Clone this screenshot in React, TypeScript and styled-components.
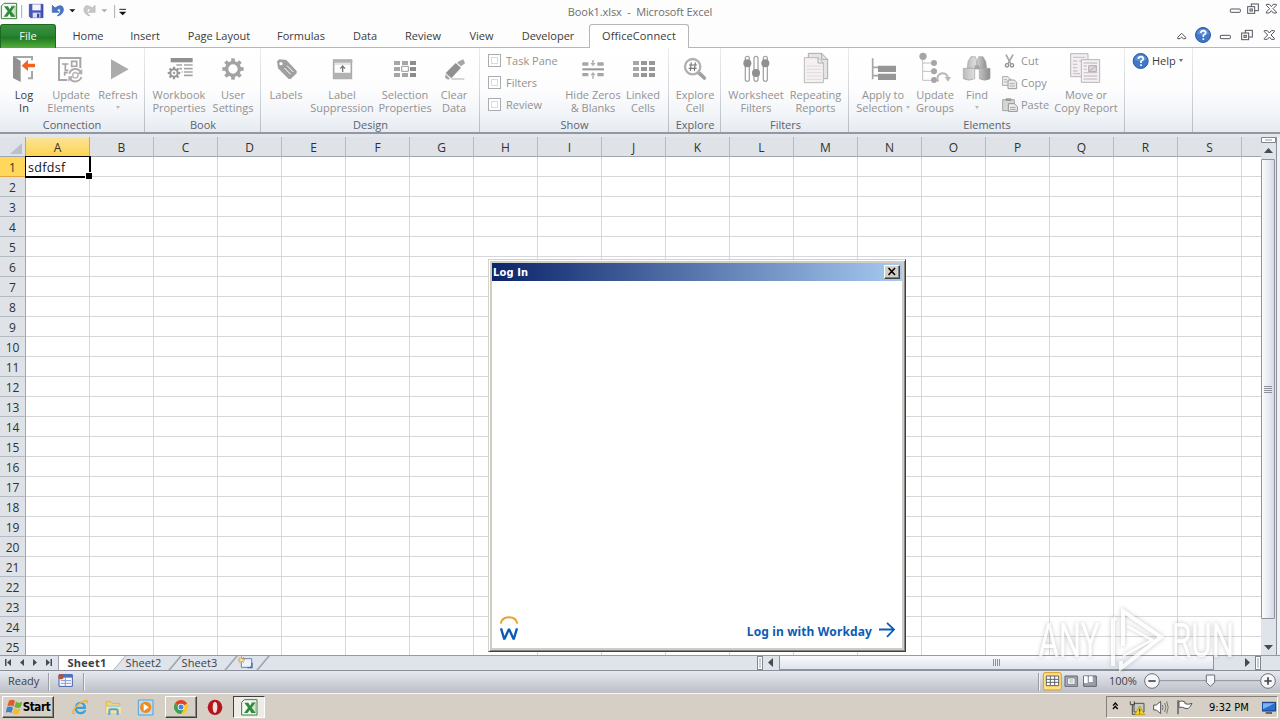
import React from 'react';
import styled, { createGlobalStyle, css } from 'styled-components';

const Global = createGlobalStyle`
  * { box-sizing: border-box; }
  html, body { margin: 0; padding: 0; overflow: hidden; }
  body { font-family: "Open Sans", "Noto Sans", sans-serif; font-size: 11px; color: #3b3b3b; background: #fff; }
  svg { display: block; flex: none; }
`;

const Screen = styled.div`
  position: relative;
  width: 1280px;
  height: 720px;
  overflow: hidden;
  display: flex;
  flex-direction: column;
  background: #fdfdfd;
`;

/* ---------- title bar ---------- */
const TitleBar = styled.header`
  height: 24px;
  display: grid;
  grid-template-columns: 240px 1fr 240px;
`;
const QuickAccess = styled.div`
  display: flex;
  height: 24px;
`;
const Title = styled.div`
  line-height: 23px;
  text-align: center;
  color: #6f6f6f;
  white-space: pre;
  letter-spacing: -0.1px;
`;
const WindowButtons = styled.div`
  display: flex;
  justify-content: flex-end;
  height: 24px;
`;

/* ---------- ribbon tabs ---------- */
const TabStrip = styled.nav`
  height: 24px;
  display: flex;
  border-bottom: 1px solid #b3b6ba;
`;
const FileTab = styled.div`
  width: 56px;
  height: 24px;
  border: 1px solid #1c6a1f;
  border-bottom: 0;
  border-radius: 3px 3px 0 0;
  background: linear-gradient(#3a9140 0%, #2a8431 45%, #1f7a25 55%, #56ad3c 100%);
  color: #f2faf0;
  line-height: 22px;
  text-align: center;
`;
const RibbonTab = styled.div<{ $w: number; $active?: boolean }>`
  width: ${p => p.$w}px;
  height: 24px;
  line-height: 24px;
  text-align: center;
  white-space: nowrap;
  ${p => p.$active && css`
    margin-left: 6px;
    border: 1px solid #b3b6ba;
    border-bottom: 0;
    border-radius: 3px 3px 0 0;
    background: #fff;
    line-height: 22px;
    letter-spacing: 0.1px;
  `}
`;
const TabTools = styled.div`
  margin-left: auto;
  height: 23px;
`;

/* ---------- ribbon ---------- */
const Ribbon = styled.section`
  height: 86px;
  display: flex;
  background: linear-gradient(#ffffff 0%, #fdfdfe 50%, #f1f4f8 80%, #e6ebf1 100%);
  border-bottom: 2px solid #9297a0;
`;
const Group = styled.div<{ $w: number; $pad?: number }>`
  width: ${p => p.$w}px;
  padding-left: ${p => p.$pad ?? 4}px;
  border-right: 1px solid;
  border-image: linear-gradient(#eceef0, #b9bdc3) 1;
  display: flex;
  flex-direction: column;
`;
const GroupBody = styled.div`
  display: flex;
  height: 70px;
`;
const GroupTitle = styled.div<{ $shift?: number }>`
  height: 14px;
  line-height: 14px;
  text-align: center;
  color: #5c636c;
  margin-left: ${p => p.$shift ?? -4}px;
`;
const BigButton = styled.div<{ $w: number; $on?: boolean }>`
  width: ${p => p.$w}px;
  display: flex;
  flex-direction: column;
  align-items: center;
  padding-top: 4px;
  color: ${p => (p.$on ? '#3b3b3b' : '#929292')};
`;
const Caption = styled.div`
  margin-top: 3px;
  line-height: 13px;
  text-align: center;
  white-space: pre;
`;
const DropArrow = styled.i<{ $dark?: boolean }>`
  display: inline-block;
  width: 0;
  height: 0;
  border: 2.5px solid transparent;
  border-top: 3px solid ${p => (p.$dark ? '#6d6d6d' : '#b8b8b8')};
  border-bottom: 0;
  vertical-align: 3px;
`;
const SmallColumn = styled.div<{ $w: number; $pad: number }>`
  width: ${p => p.$w}px;
  padding: 1px 0 0 ${p => p.$pad}px;
`;
const SmallItem = styled.div<{ $gap: number; $dark?: boolean }>`
  height: 22px;
  padding-top: 1px;
  display: flex;
  align-items: center;
  gap: ${p => p.$gap}px;
  line-height: 17px;
  color: ${p => (p.$dark ? '#3b3b3b' : '#929292')};
  white-space: nowrap;
`;
const SmallLabel = styled.span`
  height: 18px;
  line-height: 17px;
`;
const CheckBox = styled.i`
  width: 13px;
  height: 13px;
  margin-bottom: 1px;
  border: 1px solid #a9adb2;
  background: #fff;
  box-shadow: inset 0 0 0 2px #fff, inset 0 0 0 3px #d9dbde;
`;

/* ---------- sheet ---------- */
const SheetArea = styled.main`
  height: 521px;
  display: flex;
  overflow: hidden;
  background: #fff;
  border-top: 3px solid #e3e7ed;
`;
const Grid = styled.div`
  width: 1261px;
  overflow: hidden;
`;
const GridRow = styled.div`
  display: flex;
  height: 20px;
`;
const Corner = styled.div`
  width: 26px;
  flex: none;
  background: #dfe3e8;
  border-right: 1px solid #9fa6af;
  border-bottom: 1px solid #9fa6af;
  padding: 6px 0 0 10px;
`;
const ColHead = styled.div<{ $sel?: boolean }>`
  width: 64px;
  flex: none;
  text-align: center;
  font-size: 12px;
  line-height: 21px;
  color: #303030;
  background: #dfe3e8;
  border-right: 1px solid #b4bac2;
  border-bottom: 1px solid #9fa6af;
  ${p => p.$sel && css`
    background: linear-gradient(#fbe39a, #ffd452);
    border-color: #e5a53c;
  `}
`;
const RowHead = styled.div<{ $sel?: boolean }>`
  width: 26px;
  flex: none;
  text-align: center;
  font-size: 12px;
  line-height: 22px;
  color: #303030;
  background: #dfe3e8;
  border-right: 1px solid #9fa6af;
  border-bottom: 1px solid #b4bac2;
  ${p => p.$sel && css`
    background: #ffd75a;
    border-color: #e5a53c;
  `}
`;
const Cell = styled.div`
  position: relative;
  width: 64px;
  flex: none;
  font-size: 12.5px;
  letter-spacing: 0.3px;
  line-height: 21px;
  padding-left: 2px;
  color: #111;
  border-right: 1px solid #d5d7d9;
  border-bottom: 1px solid #d5d7d9;
`;
const Selection = styled.div`
  position: absolute;
  z-index: 1;
  left: -1px;
  top: -1px;
  width: 66px;
  height: 22px;
  border: 2px solid #000;
  border-left-width: 1px;
  border-top-width: 1px;
  &::after {
    content: '';
    position: absolute;
    right: -3px;
    bottom: -3px;
    width: 6px;
    height: 6px;
    background: #000;
    border: solid #fff;
    border-width: 1px 0 0 1px;
  }
`;
const VScroll = styled.div`
  width: 16px;
  height: 518px;
  background: #dfe3ea;
  border-right: 1px solid #8b9099;
  display: flex;
  flex-direction: column;
`;
const VThumb = styled.div`
  width: 14px;
  height: 460px;
  border: 1px solid #8d93a0;
  border-radius: 1px;
  background: linear-gradient(90deg, #fbfbfd, #eceef4 45%, #d6dae3);
  display: flex;
  align-items: center;
  justify-content: center;
`;
const Edge = styled.div`
  flex: 1;
  background: #f0f1f4;
`;

/* ---------- sheet tabs & horizontal scroll ---------- */
const BottomBar = styled.div`
  height: 16px;
  display: flex;
  background: #dfe3ea;
  border-top: 1px solid #959ba5;
  border-bottom: 1px solid #8a8f99;
`;
const NavArrows = styled.div`
  width: 59px;
`;
const SheetTab = styled.div<{ $w: number; $active?: boolean }>`
  position: relative;
  width: ${p => p.$w}px;
  height: 14px;
  line-height: 14px;
  padding-left: ${p => (p.$active ? 0 : 1)}px;
  text-align: center;
  font-weight: ${p => (p.$active ? 700 : 400)};
  letter-spacing: ${p => (p.$active ? 0.3 : 0.1)}px;
  color: #3c4046;
  background: ${p => (p.$active ? '#fff' : 'transparent')};
  &::after {
    content: '';
    position: absolute;
    top: 0;
    right: -5px;
    width: ${p => (p.$active ? 11 : 1)}px;
    height: 14px;
    background: ${p => (p.$active ? '#fff' : '#a3a9b3')};
    border-right: 1px solid #a3a9b3;
    transform: skewX(-40deg);
  }
`;
const TabLabel = styled.span`
  position: relative;
  z-index: 1;
`;
const HScroll = styled.div`
  margin-left: auto;
  width: 523px;
  display: flex;
`;
const SplitBox = styled.i`
  width: 6px;
  height: 14px;
  border: 1px solid #80858f;
  background: #c9ced6;
  box-shadow: inset 0 0 0 1px #fff;
`;
const HThumb = styled.div`
  width: 435px;
  height: 14px;
  border: 1px solid #8d93a0;
  border-top: 0;
  background: linear-gradient(#fafbfd, #e9ecf3 60%, #dfe3ec);
  display: flex;
  align-items: center;
  justify-content: center;
`;

/* ---------- status bar ---------- */
const StatusBar = styled.footer`
  height: 22px;
  display: flex;
  align-items: center;
  background: linear-gradient(#e6e9f0, #d0d3da 50%, #bcbfc6);
`;
const StatusText = styled.span<{ $w: number; $pad: number }>`
  width: ${p => p.$w}px;
  flex: none;
  padding-left: ${p => p.$pad}px;
  color: #3d4148;
  line-height: 20px;
  height: 22px;
`;
const StatusRule = styled.i`
  width: 2px;
  height: 18px;
  background: #9a9ea7;
  border-right: 1px solid #eef0f4;
`;
const StatusSpace = styled.div`
  flex: 1;
`;

/* ---------- taskbar ---------- */
const TaskBar = styled.div`
  height: 27px;
  display: flex;
  align-items: flex-start;
  padding: 2px 2px 0;
  background: #d5cfc6;
  border-top: 1px solid #f7f6f3;
  font-family: "DejaVu Sans Condensed", "DejaVu Sans", sans-serif;
  color: #000;
`;
const TaskButton = styled.div<{ $w: number; $state?: 'up' | 'down' }>`
  width: ${p => p.$w}px;
  height: 22px;
  display: flex;
  align-items: center;
  justify-content: center;
  ${p => p.$state === 'up' && css`
    border: 1px solid;
    border-color: #fff #404040 #404040 #fff;
    box-shadow: inset -1px -1px 0 #8a857c;
  `}
  ${p => p.$state === 'down' && css`
    border: 1px solid;
    border-color: #404040 #fff #fff #404040;
    background: #efece7;
  `}
`;
const StartLabel = styled.b`
  font-size: 11.5px;
  letter-spacing: -0.35px;
`;
const Tray = styled.div`
  margin-left: auto;
  width: 172px;
  height: 22px;
  border: 1px solid;
  border-color: #858078 #fff #fff #858078;
  display: flex;
  align-items: center;
`;
const Clock = styled.span`
  width: 53px;
  margin-left: -1px;
  font-size: 11px;
  white-space: nowrap;
`;

/* ---------- log in dialog ---------- */
const Dialog = styled.div`
  position: absolute;
  left: 488px;
  top: 259px;
  width: 418px;
  height: 393px;
  border: 1px solid;
  border-color: #d5d2cb #404040 #404040 #d5d2cb;
  box-shadow: inset 1px 1px 0 #fff, inset -1px -1px 0 #858585, inset 0 0 0 3px #d0cdc6;
  background: #fff;
  padding: 3px;
  display: flex;
  flex-direction: column;
`;
const DialogTitle = styled.div`
  height: 18px;
  padding: 0 2px 0 1px;
  display: flex;
  align-items: center;
  justify-content: space-between;
  background: linear-gradient(90deg, #0b246a, #a6caf0);
  color: #fff;
  font: bold 11px "DejaVu Sans Condensed", sans-serif;
  letter-spacing: 0.15px;
`;
const CloseButton = styled.div`
  width: 16px;
  height: 14px;
  background: #d4d0c8;
  border: 1px solid;
  border-color: #fff #404040 #404040 #fff;
  box-shadow: inset -1px -1px 0 #808080;
`;
const DialogFooter = styled.div`
  margin-top: auto;
  height: 35px;
  padding: 0 6px 0 6px;
  display: flex;
  justify-content: space-between;
`;
const LoginLink = styled.div`
  display: flex;
  align-items: center;
  gap: 7px;
  height: 34px;
  padding-top: 2px;
  font: bold 12px "Noto Sans", sans-serif;
  letter-spacing: 0.13px;
  color: #0b5cb5;
  svg { margin-bottom: 1px; }
`;

const Watermark = styled.div`
  position: absolute;
  left: 1038px;
  top: 606px;
  width: 196px;
  height: 66px;
  display: flex;
  align-items: center;
  justify-content: space-between;
  pointer-events: none;
  filter: drop-shadow(0 0 2px rgba(90, 90, 90, 0.5));
  opacity: 0.72;
`;
const MarkWord = styled.span`
  width: 62px;
  display: flex;
  justify-content: center;
  font: 400 49px/66px Roboto, sans-serif;
  color: #fff;
  transform: translateY(2px) scaleX(0.64);
`;

/* ---------- icons ---------- */
/* Icon art is drawn on a grid of three units per pixel. */
type IconProps = { x: number; y?: number; w?: number; h?: number; children: React.ReactNode };
const Icon = ({ x, y = 156, w = 32, h = 33, children }: IconProps) => (
  <svg width={w} height={h} viewBox={`${x} ${y} ${w * 3} ${h * 3}`}>{children}</svg>
);
const G = '#a6a6a6';
const D = '#919191';

const gear = (cx: number, cy: number, r: number, tooth: number, color: string) => (
  <g stroke={color} fill="none">
    <circle cx={cx} cy={cy} r={r} strokeWidth={tooth} />
    {[0, 45, 90, 135, 180, 225, 270, 315].map(a => (
      <path key={a} d={`M${cx} ${cy - r - tooth * 0.2}V${cy - r - tooth * 1.3}`} strokeWidth={tooth * 1.1} transform={`rotate(${a} ${cx} ${cy})`} />
    ))}
  </g>
);

const LogInIcon = () => (
  <Icon x={24}>
    <path d="M42 171H96V181M96 213V235H84" fill="none" stroke={G} strokeWidth="6" />
    <path d="M39 168L62 183V246L39 234Z" fill={D} />
    <path d="M105 191V202H84V213L65 197L84 179V191Z" fill="#f26322" />
  </Icon>
);
const UpdateElementsIcon = () => (
  <Icon x={165}>
    <path d="M202 240H177V174H241V205" fill="none" stroke={G} strokeWidth="6" />
    <path d="M186 192H205M196 192V211H205M215 184H230V199H215ZM194 227V218H205" fill="none" stroke={G} strokeWidth="5" />
    <circle cx="226" cy="226" r="25" fill="#fff" opacity=".8" />
    <path d="M208 221A19 19 0 0 1 243 217M244 231A19 19 0 0 1 209 234" fill="none" stroke="#b1acac" strokeWidth="6" />
    <path d="M247 207V223H231ZM205 245V229H221Z" fill="#b1acac" />
    <circle cx="226" cy="226" r="8" fill="none" stroke="#c2bcbc" strokeWidth="5" />
  </Icon>
);
const RefreshIcon = () => (
  <Icon x={306}><path d="M333 178L386 208L333 238Z" fill="#ababab" /></Icon>
);
const WorkbookIcon = () => (
  <Icon x={489}>
    <path d="M512 174H578V187H512Z" fill={D} />
    <path d="M529 195H546M552 195H578M538 206H546M552 206H578M545 216H548M552 216H578M552 226H578" stroke={G} strokeWidth="5" />
    {gear(522, 219, 11, 6, '#969696')}
    <circle cx="522" cy="219" r="4" fill={G} />
  </Icon>
);
const SettingsIcon = () => <Icon x={651}>{gear(699, 207, 19, 10, '#a3a3a3')}</Icon>;
const LabelsIcon = () => (
  <Icon x={810}>
    <path fillRule="evenodd" d="M831 184L838 178L859 180L890 213V220L872 237H866L834 205ZM843 186A5 5 0 1 0 843 196A5 5 0 1 0 843 186Z" fill="#9f9f9f" />
    <path d="M853 204L872 223M861 197L880 216" stroke="#fff" strokeWidth="3" />
  </Icon>
);
const SuppressionIcon = () => (
  <Icon x={18}>
    <path d="M41 180H94V235H41Z" fill="#fff" stroke="#aaa" strokeWidth="5" />
    <path d="M39 179H97V188H39ZM41 218H94V236H41Z" fill="#b2b2b2" />
    <path d="M43 192H92" stroke="#c9c9c9" strokeWidth="3" />
    <path d="M68 216V200M61 206L68 198L75 206" fill="none" stroke="#777" strokeWidth="4" />
  </Icon>
);
const SelectionIcon = () => (
  <Icon x={207}>
    {[0, 1, 2].map(r => [0, 1, 2].map(c => r === 1 && c === 1
      ? <path key="m" d="M245 199H265V214H245Z" fill="#fff" stroke="#9a9a9a" strokeWidth="3" />
      : <rect key={`${r}${c}`} x={222 + c * 24} y={183 + r * 18} width="18" height="12" fill={c === 2 ? '#8d8d8d' : G} />))}
  </Icon>
);
const ClearIcon = () => (
  <Icon x={354}>
    <path d="M418 183L430 178L435 190L423 199L411 188Z" fill={G} />
    <path d="M407 189L423 203L394 235L377 219Z" fill={D} />
    <path d="M377 222L390 236L384 239L375 233Z" fill={G} />
    <path d="M394 237H433" stroke="#c2c2c2" strokeWidth="4" />
  </Icon>
);
const HideIcon = () => (
  <Icon x={771}>
    <path d="M787 187H805V197H787ZM832 187H851V197H832ZM787 219H805V229H787ZM832 219H851V229H832Z" fill={G} />
    <path d="M787 208H852" stroke="#969696" strokeWidth="6" />
    <path d="M819 180V190M819 236V226" stroke="#b5b5b5" strokeWidth="5" />
    <path d="M811 189H827L819 199ZM811 226H827L819 216Z" fill="#b0b0b0" />
  </Icon>
);
const LinkedIcon = () => (
  <Icon x={-39}>
    {[0, 1, 2].map(r => [0, 1, 2].map(c => (
      <rect key={`${r}${c}`} x={-21 + c * 24} y={183 + r * 18} width="18" height="12" fill={c === 0 ? G : '#979797'} />)))}
  </Icon>
);
const ExploreIcon = () => (
  <Icon x={117}>
    <path d="M176 218L193 234" stroke="#a0a0a0" strokeWidth="11" strokeLinecap="round" />
    <circle cx="158" cy="200" r="23" fill="#fff" stroke="#b0b0b0" strokeWidth="7" />
    <path d="M154 187L151 213M166 187L163 213M147 195H171M146 205H170" stroke="#777" strokeWidth="3.5" />
  </Icon>
);
const WorksheetFiltersIcon = () => (
  <Icon x={300}>
    {[[322, 190], [348, 219], [376, 190]].map(([x, y]) => (
      <g key={x}>
        <rect x={x - 6} y="169" width="12" height="75" rx="6" fill="#fff" stroke={G} strokeWidth="4" />
        <circle cx={x} cy={y} r="12" fill="#8f8f8f" />
      </g>
    ))}
  </Icon>
);
const ReportsIcon = () => (
  <Icon x={480}>
    <path d="M505 160H545L563 178V236H505Z" fill="#e6e4e4" stroke="#aaa" strokeWidth="3" />
    <path d="M493 173H534L550 189V248H493Z" fill="#f5f1f3" stroke="#bcb8ba" strokeWidth="3" />
    <path d="M534 173V189H550M545 160V178H563" fill="none" stroke="#aaa" strokeWidth="3" />
    <path d="M500 198H544M500 208H544M500 218H544M500 228H544M500 238H544" stroke="#dedadc" strokeWidth="3" />
  </Icon>
);
const ApplyIcon = () => (
  <Icon x={681}>
    <path d="M698 175V238M698 202H714M698 227H714" stroke={G} strokeWidth="5" />
    <path d="M714 197H768V216H714ZM714 221H768V240H714Z" fill="#969696" />
  </Icon>
);
const UpdateGroupsIcon = () => (
  <Icon x={837}>
    <path d="M848 170V241H882M848 189H882M848 214H882" fill="none" stroke="#c0c0c0" strokeWidth="3" />
    <circle cx="849" cy="169" r="11" fill={G} />
    <circle cx="882" cy="189" r="9" fill={G} />
    <circle cx="882" cy="214" r="9" fill={G} />
    <circle cx="882" cy="240" r="9" fill={G} />
    <path d="M895 245A16 16 0 1 1 924 236" fill="none" stroke="#b8b8b8" strokeWidth="6" />
    <path d="M914 231H933L924 245Z" fill="#b8b8b8" />
  </Icon>
);
const FindIcon = () => (
  <Icon x={3}>
    <defs><linearGradient id="bino"><stop offset="0" stopColor="#bbb" /><stop offset=".4" stopColor="#ddd" /><stop offset="1" stopColor="#8c8c8c" /></linearGradient></defs>
    <path d="M33 170H46L50 182V205H22L24 184Z M56 170H69L77 184L80 205H52V182Z" fill="url(#bino)" stroke="#a5a5a5" strokeWidth="2" />
    <path d="M44 196H58V208H44Z" fill="#a5a5a5" />
    <path d="M10 205H44V236Q27 245 10 236Z M58 205H90V236Q74 245 58 236Z" fill="url(#bino)" stroke="#a0a0a0" strokeWidth="2" />
  </Icon>
);
const MoveIcon = () => (
  <Icon x={330}>
    <path d="M332 161H384V230H332Z" fill="#f2eef1" stroke="#bbb4b9" strokeWidth="3" />
    <path d="M339 172H376M339 183H352M339 193H352M339 203H352M339 213H352M339 221H360M358 183H366V200" fill="none" stroke="#cfc7cc" strokeWidth="4" />
    <path d="M364 179H419V247H364Z" fill="#f4f1f3" stroke="#bbb4b9" strokeWidth="3" />
    <path d="M371 189H412M371 198H380M371 208H380M371 218H412M371 228H412M371 237H412" stroke="#cfc7cc" strokeWidth="4" />
    <path d="M386 197H409V215H386ZM386 215L409 197" fill="#ddd6db" stroke="#b5adb3" strokeWidth="3" />
  </Icon>
);
const CutIcon = () => (
  <Icon x={126} y={162} w={16} h={14}>
    <path d="M138 164L152 191M159 164L144 191" stroke="#a5a5a5" strokeWidth="5" />
    <circle cx="141" cy="196" r="5" fill="none" stroke="#8f8f8f" strokeWidth="4" />
    <circle cx="156" cy="196" r="5" fill="none" stroke="#8f8f8f" strokeWidth="4" />
  </Icon>
);
const CopyIcon = () => (
  <Icon x={126} y={228} w={16} h={14}>
    <path d="M127 230H144L151 237V256H127Z" fill="#eee" stroke={G} strokeWidth="3" />
    <path d="M144 240H163L170 247V266H144Z" fill="#e9e9e9" stroke="#999" strokeWidth="3" />
    <path d="M131 239H141M131 246H141M149 251H165M149 258H165" stroke="#b0b0b0" strokeWidth="3" />
  </Icon>
);
const PasteIcon = () => (
  <Icon x={126} y={294} w={16} h={14}>
    <path d="M128 299H163V332H128Z" fill="#d6d6d6" stroke={G} strokeWidth="3" />
    <path d="M137 295H154V303H137Z" fill="#999" />
    <path d="M145 311H163L172 320V334H145Z" fill="#eee" stroke="#929292" strokeWidth="3" />
    <path d="M150 322H167M150 328H167" stroke={G} strokeWidth="3" />
  </Icon>
);
const HelpMark = ({ cx, cy }: { cx: number; cy: number }) => (
  <g>
    <circle cx={cx} cy={cy} r="22.5" fill="#3f78c9" stroke="#2b59a5" strokeWidth="3" />
    <path d={`M${cx - 18} ${cy - 4}A18.500 18.500 0 0 1 ${cx + 18} ${cy - 4}Q${cx} ${cy + 4} ${cx - 18} ${cy - 4}Z`} fill="#6a9ce0" opacity=".7" />
    <path d={`M${cx - 7} ${cy - 6}Q${cx - 6} ${cy - 13} ${cx + 1} ${cy - 13}Q${cx + 8} ${cy - 12} ${cx + 8} ${cy - 6}Q${cx + 7} ${cy - 2} ${cx + 1} ${cy + 1}V${cy + 6}M${cx + 1} ${cy + 10}V${cy + 15}`} fill="none" stroke="#fff" strokeWidth="5" />
  </g>
);
/* minimise / restore / close glyphs, top-left corner at (x, y) */
const WinGlyphs = ({ x, y, gap }: { x: number; y: number; gap: number[] }) => (
  <g fill="#fff" stroke="#50555f" strokeWidth="3">
    <rect x={x} y={y + 15} width="30" height="10" rx="2" />
    <rect x={x + gap[0] + 11} y={y} width="21" height="20" />
    <rect x={x + gap[0]} y={y + 8} width="21" height="20" />
    <rect x={x + gap[0] + 7} y={y + 15} width="7" height="6" />
    <path d={`M${x + gap[1]} ${y + 1}h9l6 7l6 -7h9v3l-10 10l10 10v3h-9l-6 -7l-6 7h-9v-3l10 -10l-10 -10z`} />
  </g>
);

const ExcelMark = ({ x, y }: { x: number; y: number }) => (
  <g>
    <path d={`M${x + 8} ${y}H${x + 46}V${y + 46}H${x}V${y + 8}Z`} fill="#f4faf3" stroke="#3b7d3f" strokeWidth="3" />
    <path d={`M${x + 29} ${y + 8}h13v31h-13`} fill="#cfe6cd" stroke="#8cba89" strokeWidth="2" />
    <path d={`M${x + 8} ${y + 9}h12l5 9l6 -9h10l-11 15l12 16h-13l-5 -9l-6 9h-11l12 -16z`} fill="#2f8a3b" />
  </g>
);

const QuickIcons = () => (
  <Icon x={0} y={0} w={130} h={24}>
    <ExcelMark x={4} y={10} />
    <path d="M65 15V54M344 15V54" stroke="#a7abb2" strokeWidth="3" />
    <path d="M88 13H129V53H92L88 49Z" fill="#4659ba" stroke="#2d3b8d" strokeWidth="2" />
    <path d="M97 13H122V31H97Z" fill="#f3f5fc" />
    <path d="M98 38H121V53H98Z" fill="#d9dff2" /><path d="M111 41H118V53H111Z" fill="#3b4ba5" />
    <path d="M157 16V37H177L170 30Q178 21 181 30Q183 39 172 48Q192 43 190 26Q186 9 165 24Z" fill="#4676cd" stroke="#3059a6" strokeWidth="2" />
    <path d="M208 28H226L217 37Z" fill="#111" />
    <path d="M285 16V37H265L272 30Q264 21 261 30Q259 39 270 48Q250 43 252 26Q256 9 277 24Z" fill="#c8c8c8" stroke="#b0b0b0" strokeWidth="2" />
    <path d="M304 28H322L313 37Z" fill="#aaa" />
    <path d="M358 28H378" stroke="#222" strokeWidth="3" /><path d="M357 35H379L368 46Z" fill="#111" />
  </Icon>
);

const arrow = (d: string) => <path d={d} fill="#454a54" />;

const COLS = 'ABCDEFGHIJKLMNOPQRST'.split('');
const ROWS = Array.from({ length: 25 }, (_, i) => i + 1);

type ButtonDef = { w: number; icon: React.ReactNode; text: string; on?: boolean; drop?: boolean };
const Big = ({ w, icon, text, on, drop }: ButtonDef) => (
  <BigButton $w={w} $on={on}>
    {icon}
    <Caption>{text}{drop && <DropArrow />}</Caption>
  </BigButton>
);

export default function App() {
  return (
    <Screen>
      <Global />
      <TitleBar>
        <QuickAccess><QuickIcons /></QuickAccess>
        <Title>Book1.xlsx  -  Microsoft Excel</Title>
        <WindowButtons>
          <Icon x={750} y={0} w={70} h={24}><WinGlyphs x={811} y={12} gap={[52, 108]} /></Icon>
        </WindowButtons>
      </TitleBar>

      <TabStrip>
        <FileTab>File</FileTab>
        <RibbonTab $w={64}>Home</RibbonTab>
        <RibbonTab $w={50}>Insert</RibbonTab>
        <RibbonTab $w={98}>Page Layout</RibbonTab>
        <RibbonTab $w={66}>Formulas</RibbonTab>
        <RibbonTab $w={62}>Data</RibbonTab>
        <RibbonTab $w={54}>Review</RibbonTab>
        <RibbonTab $w={63}>View</RibbonTab>
        <RibbonTab $w={70}>Developer</RibbonTab>
        <RibbonTab $w={100} $active>OfficeConnect</RibbonTab>
        <TabTools>
          <Icon x={600} y={72} w={120} h={23}>
            <path d="M653 112L665 100L677 112V116H670L665 111L660 116H653Z" fill="#fff" stroke="#555" strokeWidth="3" />
            <HelpMark cx={729} cy={105} />
            <WinGlyphs x={781} y={91} gap={[64, 132]} />
          </Icon>
        </TabTools>
      </TabStrip>

      <Ribbon>
        <Group $w={145}>
          <GroupBody>
            <Big w={40} icon={<LogInIcon />} text={'Log\nIn'} on />
            <Big w={54} icon={<UpdateElementsIcon />} text={'Update\nElements'} />
            <Big w={40} icon={<RefreshIcon />} text={'Refresh\n'} drop />
          </GroupBody>
          <GroupTitle>Connection</GroupTitle>
        </Group>
        <Group $w={116} $pad={5}>
          <GroupBody>
            <Big w={58} icon={<WorkbookIcon />} text={'Workbook\nProperties'} />
            <Big w={50} icon={<SettingsIcon />} text={'User\nSettings'} />
          </GroupBody>
          <GroupTitle>Book</GroupTitle>
        </Group>
        <Group $w={219} $pad={5}>
          <GroupBody>
            <Big w={40} icon={<LabelsIcon />} text="Labels" />
            <Big w={72} icon={<SuppressionIcon />} text={'Label\nSuppression'} />
            <Big w={54} icon={<SelectionIcon />} text={'Selection\nProperties'} />
            <Big w={44} icon={<ClearIcon />} text={'Clear\nData'} />
          </GroupBody>
          <GroupTitle>Design</GroupTitle>
        </Group>
        <Group $w={189} $pad={8}>
          <GroupBody>
            <SmallColumn $w={74} $pad={0}>
              {['Task Pane', 'Filters', 'Review'].map(t => (
                <SmallItem key={t} $gap={5}><CheckBox /><SmallLabel>{t}</SmallLabel></SmallItem>
              ))}
            </SmallColumn>
            <Big w={62} icon={<HideIcon />} text={'Hide Zeros\n& Blanks'} />
            <Big w={38} icon={<LinkedIcon />} text={'Linked\nCells'} />
          </GroupBody>
          <GroupTitle $shift={-7}>Show</GroupTitle>
        </Group>
        <Group $w={52} $pad={2}>
          <GroupBody><Big w={48} icon={<ExploreIcon />} text={'Explore\nCell'} /></GroupBody>
          <GroupTitle $shift={-1}>Explore</GroupTitle>
        </Group>
        <Group $w={128}>
          <GroupBody>
            <Big w={62} icon={<WorksheetFiltersIcon />} text={'Worksheet\nFilters'} />
            <Big w={57} icon={<ReportsIcon />} text={'Repeating\nReports'} />
          </GroupBody>
          <GroupTitle $shift={-2}>Filters</GroupTitle>
        </Group>
        <Group $w={276} $pad={5}>
          <GroupBody>
            <Big w={58} icon={<ApplyIcon />} text={'Apply to\nSelection '} drop />
            <Big w={46} icon={<UpdateGroupsIcon />} text={'Update\nGroups'} />
            <Big w={38} icon={<FindIcon />} text={'Find\n'} drop />
            <SmallColumn $w={56} $pad={6}>
              <SmallItem $gap={3}><CutIcon /><SmallLabel>Cut</SmallLabel></SmallItem>
              <SmallItem $gap={3}><CopyIcon /><SmallLabel>Copy</SmallLabel></SmallItem>
              <SmallItem $gap={3}><PasteIcon /><SmallLabel>Paste</SmallLabel></SmallItem>
            </SmallColumn>
            <Big w={68} icon={<MoveIcon />} text={'Move or\nCopy Report'} />
          </GroupBody>
          <GroupTitle>Elements</GroupTitle>
        </Group>
        <Group $w={68} $pad={7}>
          <SmallColumn $w={60} $pad={0}>
            <SmallItem $gap={3} $dark>
              <Icon x={516} y={156} w={17} h={18}><HelpMark cx={542} cy={183} /></Icon>
              <SmallLabel>Help</SmallLabel><DropArrow $dark />
            </SmallItem>
          </SmallColumn>
        </Group>
      </Ribbon>

      <SheetArea>
        <Grid>
          <GridRow>
            <Corner><svg width="12" height="11"><path d="M12 0V11H0Z" fill="#b9c1cb" /></svg></Corner>
            {COLS.map(c => <ColHead key={c} $sel={c === 'A'}>{c === 'T' ? '' : c}</ColHead>)}
          </GridRow>
          {ROWS.map(r => (
            <GridRow key={r}>
              <RowHead $sel={r === 1}>{r}</RowHead>
              {COLS.map(c => (
                <Cell key={c}>{r === 1 && c === 'A' && <>sdfdsf<Selection /></>}</Cell>
              ))}
            </GridRow>
          ))}
        </Grid>
        <VScroll>
          <svg width="15" height="22">
            <path d="M.5 .5H14.500V5.500H.5Z" fill="#fff" stroke="#80858f" /><path d="M4 3H11" stroke="#999" />
            {arrow('M3 16L7.500 11L12 16Z')}
          </svg>
          <VThumb><svg width="8" height="7"><path d="M0 .5H8M0 2.500H8M0 4.500H8M0 6.500H8" stroke="#8b909b" /></svg></VThumb>
          <svg width="15" height="34">{arrow('M3 26H12L7.500 31Z')}</svg>
        </VScroll>
        <Edge />
      </SheetArea>

      <BottomBar>
        <NavArrows>
          <svg width="59" height="14">
            {arrow('M5 3H6.500V10H5ZM11 3V10L7 6.500ZM24 3V10L20 6.500ZM33 3V10L37 6.500ZM46 3V10L50 6.500ZM50.500 3H52V10H50.500Z')}
            <path d="M58.500 0V14" stroke="#9aa0aa" />
          </svg>
        </NavArrows>
        <SheetTab $w={56} $active><TabLabel>Sheet1</TabLabel></SheetTab>
        <SheetTab $w={56}><TabLabel>Sheet2</TabLabel></SheetTab>
        <SheetTab $w={56}><TabLabel>Sheet3</TabLabel></SheetTab>
        <SheetTab $w={32}>
          <Icon x={683} y={167} w={31} h={14}>
            <path d="M723 175H754V196L748 201H723Z" fill="#edf2fb" stroke="#6c84b5" strokeWidth="3" />
            <path d="M741 202H755V187" fill="none" stroke="#4a67a5" strokeWidth="4" />
            <path d="M723 168V190M712 179H734M715 171L731 187M731 171L715 187" stroke="#d99322" strokeWidth="3" />
            <circle cx="723" cy="179" r="4" fill="#fff0b0" />
          </Icon>
        </SheetTab>
        <HScroll>
          <SplitBox />
          <svg width="16" height="14">{arrow('M10 2V11L5 6.500Z')}</svg>
          <HThumb><svg width="8" height="7"><path d="M.5 0V7M2.500 0V7M4.500 0V7M6.500 0V7" stroke="#8b909b" /></svg></HThumb>
          <svg width="41" height="14">{arrow('M31 2V11L36 6.500Z')}</svg>
          <SplitBox />
        </HScroll>
      </BottomBar>

      <StatusBar>
        <StatusText $w={48} $pad={8}>Ready</StatusText>
        <StatusRule />
        <Icon x={150} y={213} w={33} h={22}>
          <path d="M177 224H217V259H177Z" fill="#fff" stroke="#3f5fae" strokeWidth="3" />
          <path d="M177 224H217V233H177Z" fill="#4a72c6" />
          <path d="M182 242H213M182 250H213M196 234V258" stroke="#7c9ad6" strokeWidth="3" />
          <circle cx="183" cy="230" r="8" fill="#b5523d" />
        </Icon>
        <StatusRule />
        <StatusSpace />
        <StatusRule />
        <Icon x={240} y={213} w={68} h={22}>
          <rect x="250" y="218" width="54" height="52" rx="5" fill="#ffe07a" stroke="#d99a2b" strokeWidth="3" />
          <path d="M259 228H296V257H259ZM259 238H296M259 247H296M271 228V257M284 228V257" fill="#fff" stroke="#5e636d" strokeWidth="3" />
          <path d="M315 228H352V259H315Z" fill="#aab0ba" stroke="#5e636d" strokeWidth="3" />
          <path d="M323 234H345V253H323Z" fill="#fff" stroke="#5e636d" strokeWidth="2" /><path d="M328 240H340M328 246H340" stroke="#777" strokeWidth="2" />
          <path d="M371 228H409V259H371Z" fill="#9aa0ab" stroke="#5e636d" strokeWidth="3" />
          <path d="M372 229H383V249H372ZM387 229H398V246H387Z" fill="#fff" />
        </Icon>
        <StatusText $w={35} $pad={1}>100%</StatusText>
        <Icon x={549} y={213} w={137} h={22}>
          <path d="M600 242H900" stroke="#8e939d" strokeWidth="3" />
          <circle cx="576" cy="243" r="22" fill="#f5f6f9" stroke="#6d727c" strokeWidth="3" />
          <path d="M565 243H587" stroke="#444" strokeWidth="5" />
          <circle cx="924" cy="243" r="22" fill="#f5f6f9" stroke="#6d727c" strokeWidth="3" />
          <path d="M913 243H935M924 232V254" stroke="#444" strokeWidth="5" />
          <path d="M739 225H764V247L751 259L739 247Z" fill="#f5f6f9" stroke="#6d727c" strokeWidth="3" />
        </Icon>
      </StatusBar>

      <TaskBar>
        <TaskButton $w={52} $state="up">
          <svg width="17" height="16" viewBox="0 0 51 48">
            <path d="M9 5Q19 -1 27 6L22 23Q14 17 4 22Z" fill="#e2592b" />
            <path d="M30 8Q39 14 49 8L44 25Q35 30 25 24Z" fill="#69b23c" />
            <path d="M3 25Q13 20 21 26L16 42Q8 37 -1 41Z" fill="#3f7fd0" />
            <path d="M24 28Q33 33 43 28L38 44Q29 49 19 43Z" fill="#f4bb2c" />
          </svg>
          <StartLabel>Start</StartLabel>
        </TaskButton>
        <TaskButton $w={51}>
          <svg width="18" height="18" viewBox="0 0 54 54">
            <path fillRule="evenodd" d="M44 33H18Q20 43 30 42Q36 42 39 37H46Q41 50 28 49Q10 47 11 29Q13 11 29 11Q46 13 45 33ZM18 26H37Q36 17 28 17Q20 17 18 26Z" fill="#3a9fdb" />
            <path d="M5 48Q-1 36 20 19Q42 1 50 7Q53 11 48 19Q48 9 38 12Q22 18 10 37Q6 46 14 45Q9 51 5 48Z" fill="#eeb52f" />
          </svg>
        </TaskButton>
        <TaskButton $w={17}>
          <svg width="17" height="17" viewBox="0 0 51 51">
            <path d="M3 8H18L22 13H44V42H3Z" fill="#f4d26c" stroke="#d3a941" strokeWidth="2" />
            <path d="M7 18H46V26H7Z" fill="#9fd3ef" /><path d="M3 24H48V43H3Z" fill="#f9e39a" />
            <path d="M13 48V36Q13 31 18 31H33Q38 31 38 36V48" fill="none" stroke="#57a5d6" strokeWidth="6" />
          </svg>
        </TaskButton>
        <TaskButton $w={43}>
          <svg width="22" height="17" viewBox="-14 0 66 51">
            <path d="M2 3H46V48H2Z" fill="#bcdcf2" stroke="#5ba0d0" strokeWidth="3" />
            <circle cx="24" cy="25" r="17" fill="#f08a1c" /><path d="M18 14L34 25L18 36Z" fill="#fff" />
          </svg>
        </TaskButton>
        <TaskButton $w={32} $state="up">
          <svg width="16" height="16" viewBox="-24 -24 48 48">
            <circle r="21" fill="#fbc926" />
            <path d="M0 0L-18.200 -10.500A21 21 0 0 1 18.200 -10.500Z" fill="#e3402f" />
            <path d="M0 0L-18.200 -10.500A21 21 0 0 0 0 21L9 5Z" fill="#3ba253" />
            <circle r="10" fill="#fff" /><circle r="7.500" fill="#4383ee" />
          </svg>
        </TaskButton>
        <TaskButton $w={36}>
          <svg width="16" height="17" viewBox="0 0 48 51">
            <ellipse cx="24" cy="25" rx="22" ry="23" fill="#b5161c" />
            <ellipse cx="24" cy="25" rx="7" ry="17" fill="#efe3df" />
          </svg>
        </TaskButton>
        <TaskButton $w={32} $state="down">
          <Icon x={0} y={0} w={17} h={17}><ExcelMark x={2} y={2} /></Icon>
        </TaskButton>
        <Tray>
          <Icon x={441} y={290} w={103} h={20}>
            <path d="M459 316L466 308L473 316M459 326L466 318L473 326" fill="none" stroke="#000" strokeWidth="4" />
            <path d="M522 309H552V335H522Z" fill="#c6c8c2" stroke="#555" strokeWidth="3" />
            <path d="M511 303V313H523V303M517 313V342H528" fill="none" stroke="#444" strokeWidth="3" />
            <path d="M539 317L554 343H524Z" fill="#f4d321" stroke="#a78a10" strokeWidth="2" /><path d="M539 325V334M539 337V340" stroke="#222" strokeWidth="3" />
            <path d="M581 314H589L602 303V340L589 329H581Z" fill="#fff" stroke="#555" strokeWidth="3" />
            <path d="M607 314Q611 321 607 329M614 308Q621 321 614 335M620 303Q629 321 620 340" fill="none" stroke="#777" strokeWidth="3" />
            <path d="M654 300V342" stroke="#555" strokeWidth="4" />
            <path d="M657 303Q667 300 675 305V310Q685 314 696 309Q692 319 684 325Q674 325 668 321H657Z" fill="#fff" stroke="#555" strokeWidth="3" />
          </Icon>
          <Clock>9:32 PM</Clock>
          <Icon x={904} y={296} w={15} h={16}>
            <path d="M904 306H945V332H904Z" fill="#2a6fd0" stroke="#123a7c" strokeWidth="3" />
            <path d="M907 309H942L907 326Z" fill="#79b5f3" /><path d="M915 338H934" stroke="#333" strokeWidth="4" />
          </Icon>
        </Tray>
      </TaskBar>

      <Dialog>
        <DialogTitle>
          Log In
          <CloseButton><svg width="14" height="12"><path d="M3.500 2L10 9M10 2L3.500 9" stroke="#000" strokeWidth="1.600" /></svg></CloseButton>
        </DialogTitle>
        <DialogFooter>
          <Icon x={54} y={38} w={22} h={32}>
            <path d="M62 70Q66 51 87 51Q108 51 112 70" fill="none" stroke="#e8a02c" strokeWidth="6" />
            <path d="M63 84L73 117L87 86L101 117L111 84" fill="none" stroke="#0b5cb5" strokeWidth="7" strokeLinejoin="bevel" />
          </Icon>
          <LoginLink>
            Log in with Workday
            <svg width="17" height="17" viewBox="0 0 17 17"><path d="M0 7.500H15M8 .8L15 7.500L8 14.800" fill="none" stroke="#0b5cb5" strokeWidth="1.800" /></svg>
          </LoginLink>
        </DialogFooter>
      </Dialog>

      <Watermark>
        <MarkWord>ANY</MarkWord>
        <svg width="58" height="66" viewBox="0 0 58 66" fill="none" stroke="#fff" strokeWidth="4">
          <path d="M9 12L6 14V60M16 40V5L54 31L14 62V55" />
          <path d="M20 20L45 34L16 50" strokeWidth="2.500" />
        </svg>
        <MarkWord>RUN</MarkWord>
      </Watermark>
    </Screen>
  );
}
